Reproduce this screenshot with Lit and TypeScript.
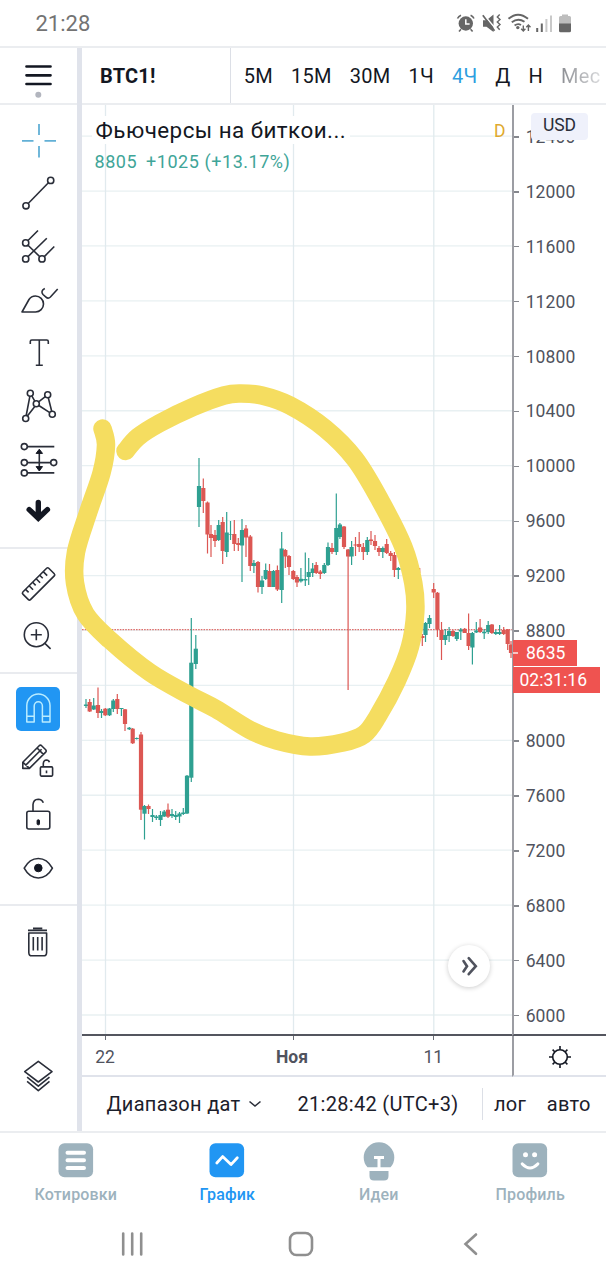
import {LitElement, html, svg, css} from 'lit';
import {customElement, property, state} from 'lit/decorators.js';
import {classMap} from 'lit/directives/class-map.js';

// [x, high, body top, body bottom, low, rising]
type Candle = [number, number, number, number, number, 0 | 1];

const CANDLES: Candle[] = [
    [86, 699, 704.5, 706, 708, 1],
    [89.7, 699, 702, 711.5, 712, 0],
    [93.7, 698, 705.5, 709.5, 710, 1],
    [98, 687.5, 705, 713, 718, 0],
    [101.5, 709, 711, 713, 718, 1],
    [105.3, 708, 708.7, 715.3, 716, 0],
    [109.5, 708, 708.5, 715.3, 716, 1],
    [113.3, 699, 700.5, 709, 712, 1],
    [117.3, 694, 699, 709, 714, 0],
    [121.4, 708, 708, 709, 716, 1],
    [125, 709, 709.3, 724, 731, 0],
    [129.3, 727, 727.7, 729.3, 730, 1],
    [132.7, 728, 728.7, 743.3, 744, 0],
    [136.7, 737.5, 738, 739, 739.5, 1],
    [141, 732, 734.5, 809.7, 820, 0],
    [144.5, 805, 806, 813.7, 839.5, 1],
    [148.5, 804.5, 806, 809, 814, 0],
    [152.5, 809, 815, 817, 822, 1],
    [156.3, 815, 816.5, 818, 820, 1],
    [160.5, 811, 815, 820, 826, 1],
    [164.2, 810, 811.5, 816.5, 817, 1],
    [168, 803.5, 809.7, 816.7, 818, 0],
    [172, 809, 814, 816, 818, 1],
    [175.7, 811, 815, 817, 820, 1],
    [179.5, 812, 813.5, 816.5, 823, 1],
    [183.3, 808, 812.5, 814, 815, 1],
    [187, 775, 775.7, 813.5, 814, 1],
    [191.3, 618, 662.7, 777.7, 782, 1],
    [195.8, 635, 648.7, 664, 669, 1],
    [199, 458, 486, 507, 527, 1],
    [203.3, 478.5, 488, 501, 513, 0],
    [207.5, 501.5, 502.5, 534.5, 553.5, 0],
    [211, 525, 534, 538, 557, 0],
    [215, 530, 535, 541, 547, 0],
    [218.7, 520, 525, 540, 541, 1],
    [222.7, 517, 522, 551, 564, 0],
    [226.7, 512, 532.5, 552, 557, 1],
    [230.5, 521, 534, 534.6, 540, 1],
    [234.3, 520, 534, 544, 551, 0],
    [238.3, 538, 543, 545, 551, 0],
    [242, 519, 530, 545.5, 582, 1],
    [246, 525, 528.5, 537.5, 557, 0],
    [250.3, 535, 536.5, 566, 571, 0],
    [253.9, 560, 563, 566, 573, 1],
    [258, 561, 562, 587, 592.5, 0],
    [262, 576, 580.5, 587, 594, 1],
    [265.7, 563.5, 570, 579, 580, 1],
    [269.5, 564, 571, 587, 587, 0],
    [273.5, 570, 571, 587, 587, 1],
    [277.4, 565.5, 570, 589.5, 591, 0],
    [281.7, 532, 548.5, 590, 603, 1],
    [285.3, 549, 550, 556.5, 568, 0],
    [289, 555, 556, 567, 575, 0],
    [293.3, 570, 571, 579, 580, 0],
    [297, 575, 577, 582.5, 587, 0],
    [300.9, 568, 578.8, 581.3, 582.5, 1],
    [305.3, 552.5, 579, 580.5, 586, 1],
    [308.7, 558, 572, 577, 585, 1],
    [312.7, 563, 568.5, 573, 577, 1],
    [316.2, 562, 565, 573, 574, 0],
    [320.3, 570, 571.5, 574, 579, 0],
    [324.3, 563, 565, 573, 574, 1],
    [328, 542.5, 547, 565, 566, 1],
    [332, 543, 548, 552, 554, 0],
    [336.3, 493.5, 528, 552, 555, 1],
    [339.9, 523, 524.5, 537, 539, 1],
    [344, 526, 526.5, 547, 549, 0],
    [348.1, 549, 549.5, 556.5, 690, 0],
    [351.6, 541, 547, 556.5, 565, 1],
    [355.5, 537, 544.5, 545.5, 556, 0],
    [359.2, 532, 544, 547, 552, 0],
    [363.3, 543, 547, 552, 560, 0],
    [367.3, 537, 540, 552, 555, 1],
    [371, 531, 539.5, 541, 545, 0],
    [375, 535, 541, 546, 550, 0],
    [379, 546, 548, 552, 556, 0],
    [382.8, 546.5, 548, 552, 558, 1],
    [386.7, 539, 544, 553, 554, 0],
    [390.7, 551, 553, 556, 561, 0],
    [394.4, 552, 555, 570, 577, 0],
    [398.3, 567, 568, 570, 579, 1],
    [418.2, 567, 568, 573, 574, 0],
    [422.3, 634, 636, 638, 646, 0],
    [425.5, 622, 623, 635, 642, 1],
    [429.5, 615, 618, 624, 628, 1],
    [433.7, 583, 589, 592.5, 598, 0],
    [437.4, 592, 592.7, 629.5, 637, 0],
    [441.5, 622, 630, 640, 660, 0],
    [445.3, 629, 635, 640, 645, 1],
    [449.1, 627, 631, 636, 642, 1],
    [453, 630, 631, 636, 637, 0],
    [456.8, 632, 632, 639, 641, 1],
    [460.8, 628, 629.5, 631.5, 640, 1],
    [464.7, 628, 628.8, 633, 633, 0],
    [468.6, 613.5, 633, 646, 650, 0],
    [472.4, 632, 633, 647.5, 664.5, 1],
    [476.3, 622, 630.5, 632.5, 633, 1],
    [480.1, 619, 627.5, 632, 633, 0],
    [484.2, 629, 631.7, 633.3, 639, 1],
    [488.2, 621, 625, 632, 634, 1],
    [491.9, 624, 624.5, 633, 634, 0],
    [495.8, 630, 632, 634, 635, 1],
    [499.6, 625, 632, 634, 635, 1],
    [503.7, 627, 630, 634, 635, 0],
    [507.7, 629, 629.5, 644, 650, 0],
    [511, 641, 644.5, 653, 658, 0],
];

const PRICES = [12400, 12000, 11600, 11200, 10800, 10400, 10000, 9600, 9200, 8800,
    8400, 8000, 7600, 7200, 6800, 6400, 6000];
const PRICE_STEP = 54.93;
const TIME_LINES = [105.5, 293.5, 433.8];

// freehand marker stroke, smoothed when drawn
const MARKER: [number, number][] = [
    [102.5, 428.5], [106, 445], [101.5, 473], [88.3, 512], [76, 552], [75, 583], [85.5, 614],
    [110, 640], [150, 672.5], [190, 695.5], [216, 709], [250, 730], [276.7, 740.5], [310, 746.5],
    [343, 742.5], [364, 734.5], [377.5, 716.7], [396.7, 681], [410, 646.7], [415.3, 612],
    [413.3, 583], [403.3, 546.7], [380, 500], [355, 459], [325, 428.5], [290, 405.5],
    [262, 395.5], [241, 393.5], [224, 395.5], [193, 407], [160, 423], [138, 437], [125.5, 451],
];

function smoothPath(points: [number, number][]) {
    let d = `M${points[0][0]} ${points[0][1]}`;
    for (let i = 0; i < points.length - 1; i++) {
        const p0 = points[Math.max(i - 1, 0)];
        const p1 = points[i];
        const p2 = points[i + 1];
        const p3 = points[Math.min(i + 2, points.length - 1)];
        d += ` C${p1[0] + (p2[0] - p0[0]) / 6} ${p1[1] + (p2[1] - p0[1]) / 6}`
            + ` ${p2[0] - (p3[0] - p1[0]) / 6} ${p2[1] - (p3[1] - p1[1]) / 6} ${p2[0]} ${p2[1]}`;
    }
    return d;
}

// tool icons, drawn around the origin
const ICONS: Record<string, unknown> = {
    cross: svg`<path stroke="#62b0d6" stroke-width="1.8" d="M1 -16V-5M1 6V17.5M-16 .8H-4.5M6.5 .8H18"/>`,
    line: svg`<circle cx="-12" cy="12.8" r="3.1"/><circle cx="12.7" cy="-12.6" r="3.1"/>
        <path d="M-9.8 10.5L10.4 -10.3"/>`,
    pitchfork: svg`<circle cx="-12.3" cy="-3.1" r="3.1"/><circle cx="-12.3" cy="12.9" r="3.1"/>
        <circle cx="4" cy="12.9" r="3.1"/>
        <path d="M-10 -5.5L0 -15.5M-10 10.6L8.8 -7.8M6.3 10.6L16.3 .5M-10 -.8L1.8 10.7"/>`,
    brush: svg`<path d="M-16 13L-9 .5C-7.4 -2 -5 -3 -2.5 -3A8 8 0 0 1 -2.5 13Z"/>
        <path d="M6.8 -10.5Q2.2 -8 5 -4.5L8 -1.8Q10.2 .2 12.4 -2L19.7 -10"/>`,
    text: svg`<path d="M-7.7 -8V-10.5Q-7.7 -12 -6.2 -12H8.8Q10.3 -12 10.3 -10.5V-8M1.3 -12V13.2M-2.2 13.2H4.8"/>`,
    pattern: svg`<circle cx="-7.7" cy="-11.8" r="3"/><circle cx="9.7" cy="-10.2" r="3"/>
        <circle cx="-1.7" cy="-1.2" r="3"/><circle cx="-12.3" cy="13.5" r="3"/>
        <circle cx="14.3" cy="9.2" r="3"/>
        <path d="M-8.1 -8.8L-11.8 10.5M-6.2 -9.2L-3.2 -3.8M.6 -3.2L7.3 -8.3M10.3 -7.2L13.7 6.2M-3.2 1.4L-10.6 11M.8 .5L11.8 7.6"/>`,
    position: svg`<circle cx="-13.7" cy="-11.4" r="3"/><circle cx="-13.7" cy="4.6" r="3"/>
        <circle cx="-13.7" cy="14.9" r="3"/><circle cx="15.7" cy="4.6" r="3"/>
        <path d="M-10.7 -11.4H16.3M-10.7 4.6H12.7M-10.7 14.9H16.3M1.3 -6V11"/>
        <path class="fill" d="M1.3 -8.8L4.5 -4.6H-1.9ZM1.3 13L4.5 8.6H-1.9Z"/>`,
    arrow: svg`<path class="thick" d="M.3 -8.6V7M-8.8 -1.4L.3 7.2L9.4 -1.4"/>`,
    ruler: svg`<g transform="translate(.5 .9) rotate(-45)"><rect x="-18.3" y="-5.3" width="36.6" height="10.8" rx="1.5"/>
        <path d="M-13 -5.3V-1M-8 -5.3V.3M-3 -5.3V-1M2 -5.3V.3M7 -5.3V-1M12 -5.3V.3"/></g>`,
    zoom: svg`<circle cx="-1.7" cy="-1.3" r="12"/><path d="M-7.2 -1.3H3.8M-1.7 -6.8V4.2M6.9 7.4L12.6 12.9"/>`,
    magnet: svg`<path stroke="#b9ecff" stroke-width="1.5" d="M-11.2 13V-3.5A11.6 11.4 0 0 1 12 -3.5V13H4.4V-3A4 4.2 0 0 0 -3.8 -3V13ZM-11.2 7.2H-3.8M4.4 7.2H12"/>`,
    pencil: svg`<path d="M-15.2 6.4V.2L1.2 -16.3Q2.4 -17.3 3.6 -16.3L7.7 -12.3Q8.7 -11 7.7 -9.9L-8.6 6.4ZM-12.5 3.4L3.6 -12.8M-15 .4L-8.8 6M-.9 -14L5.4 -7.6"/>
        <rect x="2.4" y="4.9" width="12.2" height="9.2" rx="1"/><path d="M5.3 4.6V1.8Q5.5 -1.9 8.6 -2Q10.8 -2 11.4 .2M8.5 8.6V11.2"/>`,
    lock: svg`<rect x="-11.2" y="-3.7" width="23" height="17.7" rx="2"/>
        <path d="M-5 -3.7V-10.5Q-4.6 -15.6 .2 -15.8Q4 -15.7 5.3 -12.2"/><rect class="fill" x="-.9" y="4.8" width="2.4" height="5" rx="1"/>`,
    eye: svg`<path d="M-13.8 .2C-6.8 -12.8 7.4 -12.8 14.4 .2C7.4 13.2 -6.8 13.2 -13.8 .2Z"/>
        <circle class="fill" cx=".3" cy="0" r="3.8"/>`,
    trash: svg`<path d="M-10 -10.6H9M-5 -12.6H4.3M-9.2 -8V11.4Q-9.2 14.8 -6 14.8H5.4Q8.6 14.8 8.6 11.4V-8ZM-4.7 -4V9.4M-.3 -4V9.4M4.1 -4V9.4"/>`,
    layers: svg`<path d="M.3 -14.7L14 -4.3L.3 6L-13.3 -4.3ZM-10.9 1.2L.3 10.2L11.5 1.2M-10.9 5.4L.3 14.6L11.5 5.4"/>`,
};

const TOOL_GROUPS = [
    ['cross', 'line', 'pitchfork', 'brush', 'text', 'pattern', 'position', 'arrow'],
    ['ruler', 'zoom'],
    ['magnet', 'pencil', 'lock', 'eye'],
    ['trash'],
];

@customElement('status-bar')
export class StatusBar extends LitElement {
    static styles = css`
        :host {
            display: flex;
            justify-content: space-between;
            align-items: center;
            height: 46px;
            padding: 0 32px 0 35.5px;
            box-sizing: border-box;
            color: #737373;
            font-size: 22px;
        }

        svg {
            display: block;
        }
    `;

    render() {
        return html`
            <span>21:28</span>
            <svg width="120" height="24" viewBox="454 10 120 24" fill="none" stroke="#666" stroke-width="1.6">
                <circle cx="465.8" cy="22.5" r="7.2" fill="#666" stroke="none"/>
                <path d="M457.5 17.5Q458.6 15.2 461 14.2M474 17.5Q473 15.2 470.6 14.2M461 28.2L459 30.6M470.6 28.2L472.6 30.6"/>
                <path stroke="#fff" stroke-width="1.5" d="M465.8 18.3V23H469.6"/>
                <path fill="#666" stroke="none" d="M483 19.3H486.5L493.5 13.5V31L486.5 25.8H483Z"/>
                <path stroke="#fff" stroke-width="1.4" d="M484.5 14.5L495 27"/>
                <path stroke-width="1.7" d="M482.8 14.3L494.5 29.8"/>
                <path stroke-width="1.4" d="M499.7 13.5L497.3 16L500 18.5L497.3 21L500 23.5L497.3 26L499.7 28.8"/>
                <path stroke-width="1.9" d="M508.5 17.8Q518 9.5 528 17.8M511.8 21.3Q518 16.4 524.5 20.8M514.6 24.6Q517.8 22 521 24"/>
                <circle cx="517.8" cy="26.6" r="1.7" fill="#666" stroke="none"/>
                <path stroke-width="1.4" d="M523.3 24.5V30M521.2 27.8L523.3 30L525.4 27.8M528.4 30V24M526.3 26.2L528.4 24L530.5 26.2"/>
                <path stroke-width="2" d="M537.2 27V31M541.8 22.5V31"/>
                <path stroke="#c9c9c9" stroke-width="2" d="M546.4 18V31M551 14.5V31"/>
                <path fill="#bdbdbd" stroke="none" d="M559 23V16.5Q559 15 560.5 15H562V13.4H568V15H569.5Q571 15 571 16.5V23Z"/>
                <path fill="#666" stroke="none" d="M559 22.5H571V29.8Q571 31.3 569.5 31.3H560.5Q559 31.3 559 29.8Z"/>
            </svg>
        `;
    }
}

@customElement('tool-icon')
export class ToolIcon extends LitElement {
    static styles = css`
        :host {
            display: block;
            width: 44px;
            height: 44px;
            border-radius: 5px;
        }

        :host([active]) {
            background: #2196f3;
        }

        svg {
            display: block;
            overflow: visible;
            fill: none;
            stroke: #2a2e39;
            stroke-width: 1.6;
            stroke-linejoin: round;
        }

        .fill {
            fill: #131722;
            stroke: #131722;
            stroke-width: 1;
        }

        .thick {
            stroke: #131722;
            stroke-width: 5.4;
            stroke-linecap: round;
            stroke-linejoin: miter;
        }
    `;

    @property() name = '';
    @property({type: Boolean, reflect: true}) active = false;

    render() {
        return html`<svg width="44" height="44" viewBox="-22 -22 44 44">${ICONS[this.name]}</svg>`;
    }
}

@customElement('side-toolbar')
export class SideToolbar extends LitElement {
    static styles = css`
        :host {
            display: flex;
            flex-direction: column;
            width: 77px;
            border-right: 5px solid #e0e3eb;
        }

        .menu {
            height: 57px;
            border-bottom: 2px solid #ebedf0;
            box-sizing: border-box;
        }

        .menu svg {
            display: block;
        }

        .group {
            padding: 8.4px 1px 9.2px 0;
            border-bottom: 2px solid #e9ebef;
            display: grid;
            grid-auto-rows: 53px;
            place-items: center;
        }

        .group:last-of-type {
            border-bottom: none;
        }

        .layers {
            margin: auto auto 33px 16px;
        }
    `;

    @state() private _active = 'magnet';

    render() {
        return html`
            <div class="menu">
                <svg width="77" height="55" viewBox="0 48 77 55">
                    <path stroke="#131722" stroke-width="2.7" stroke-linecap="round" d="M26.5 66.5H50.5M26.5 75.3H50.5M26.5 84H50.5"/>
                    <circle cx="38.3" cy="94.8" r="3" fill="#b2b5be"/>
                </svg>
            </div>
            ${TOOL_GROUPS.map((group) => html`
                <div class="group">
                    ${group.map((name) => html`
                        <tool-icon name="${name}" ?active=${name === this._active}></tool-icon>`)}
                </div>`)}
            <tool-icon class="layers" name="layers"></tool-icon>
        `;
    }
}

@customElement('chart-header')
export class ChartHeader extends LitElement {
    static styles = css`
        :host {
            display: flex;
            height: 57px;
            box-sizing: border-box;
            border-bottom: 2px solid #ebedf0;
            color: #131722;
            font-size: 20px;
            overflow: hidden;
        }

        .symbol {
            width: 149px;
            padding-left: 18px;
            box-sizing: border-box;
            border-right: 1.5px solid #dcdfe6;
            font-weight: 700;
            letter-spacing: 0.2px;
            display: flex;
            align-items: center;
        }

        .intervals {
            flex: 1;
            display: flex;
            align-items: center;
            gap: 17.9px;
            padding-left: 12.8px;
            white-space: nowrap;
            letter-spacing: 0.3px;
        }

        .active {
            color: #2f9fe0;
        }

        .cut {
            background: linear-gradient(90deg, #8c8e93, #d8d9db);
            background-clip: text;
            color: transparent;
        }
    `;

    @state() private _interval = '4Ч';

    render() {
        return html`
            <div class="symbol">BTC1!</div>
            <div class="intervals">
                ${['5М', '15М', '30М', '1Ч', '4Ч', 'Д', 'Н', 'Мес'].map((label) => html`
                    <span class=${classMap({active: label === this._interval, cut: label === 'Мес'})}>${label}</span>`)}
            </div>
        `;
    }
}

@customElement('price-chart')
export class PriceChart extends LitElement {
    static styles = css`
        :host {
            position: relative;
            display: grid;
            grid-template-columns: 430px 1fr;
            grid-template-rows: 931px 41px;
            color: #50535e;
            font-size: 17.5px;
        }

        .plot {
            border-bottom: 2px solid #54565f;
            box-sizing: border-box;
            overflow: hidden;
        }

        .plot svg {
            display: block;
        }

        .legend {
            position: absolute;
            left: 10px;
            top: 11px;
        }

        .title {
            font-size: 22.4px;
            line-height: 28px;
            letter-spacing: 0.47px;
            color: #131722;
            background: #fff;
            padding: 0 4px 0 3.5px;
            margin-bottom: 5px;
        }

        .change {
            font-size: 18px;
            line-height: 26px;
            padding-left: 2.5px;
            color: #3fa598;
            letter-spacing: 0.52px;
            word-spacing: 0.3px;
        }

        .change b {
            font-weight: 400;
            margin-right: 9px;
        }

        .delay {
            position: absolute;
            left: 412px;
            top: 15px;
            line-height: 22px;
            color: #e0a92e;
            font-size: 17.5px;
        }

        .scale {
            border-left: 2px solid #9c9da3;
            border-bottom: 2px solid #54565f;
            box-sizing: border-box;
            overflow: hidden;
            padding-top: 4.4px;
        }

        .price {
            display: flex;
            align-items: center;
            gap: 6.7px;
            height: 54.93px;
            letter-spacing: 0.1px;
        }

        .price::before {
            content: '';
            width: 5px;
            height: 1.5px;
            background: #85878d;
        }

        .unit {
            position: absolute;
            left: 449px;
            top: 8px;
            width: 57px;
            height: 27px;
            line-height: 25px;
            border-radius: 4px;
            background: #eff1fb;
            color: #2a2e39;
            text-align: center;
            font-size: 17.5px;
        }

        .last {
            position: absolute;
            left: 431px;
            top: 535px;
            color: #fff;
        }

        .last div {
            display: flex;
            align-items: center;
            gap: 8px;
            width: 63.5px;
            height: 26px;
            margin-bottom: 1px;
            background: #ef5350;
        }

        .last div:first-child::before {
            content: '';
            width: 5px;
            height: 1.5px;
            background: #f9c3c2;
        }

        .last .countdown {
            width: 86.5px;
            padding-left: 6.5px;
            box-sizing: border-box;
        }

        .scroll {
            position: absolute;
            left: 365.5px;
            top: 839.5px;
            width: 42px;
            height: 42px;
            border-radius: 50%;
            background: #fff;
            box-shadow: 0 1px 5px rgba(0, 0, 0, 0.2);
        }

        .times {
            display: grid;
            grid-template-columns: 46px 328px 1fr;
            align-items: center;
            border-bottom: 2px solid #e0e3eb;
            box-sizing: border-box;
            padding-top: 3px;
            background:
                linear-gradient(#6a6d76, #6a6d76) 23px 0 / 1px 4px no-repeat,
                linear-gradient(#6a6d76, #6a6d76) 211px 0 / 1px 4px no-repeat,
                linear-gradient(#6a6d76, #6a6d76) 351px 0 / 1px 4px no-repeat;
        }

        .times span {
            text-align: center;
        }

        .times .month {
            font-weight: 700;
        }

        .times span:last-child {
            text-align: left;
            margin-left: -32.5px;
        }

        .corner {
            border-left: 2px solid #9c9da3;
            border-bottom: 2px solid #e0e3eb;
            box-sizing: border-box;
            display: grid;
            place-items: center;
            padding-top: 2px;
        }
    `;

    _candle([x, high, top, bottom, low, up]: Candle) {
        const color = up ? '#2ea091' : '#dc5753';
        return svg`
            <path stroke="${color}" stroke-width="1.2" d="M${x} ${high}V${low}"/>
            <rect x="${x - 2.1}" y="${top}" width="4.2" height="${bottom - top}" fill="${color}"/>
        `;
    }

    render() {
        return html`
            <div class="plot">
                <svg width="430" height="929" viewBox="82 105 430 929">
                    ${PRICES.map((_, i) => svg`
                        <path stroke="#e8f0f2" stroke-width="1.3" d="M82 ${136.1 + i * PRICE_STEP}H513"/>`)}
                    ${TIME_LINES.map((x) => svg`
                        <path stroke="#e1eaee" stroke-width="1.3" d="M${x} 105V1034"/>`)}
                    <path stroke="#dd6f6c" stroke-width="1.3" stroke-dasharray="1.6 1.1" d="M82 629.6H513"/>
                    ${CANDLES.map((candle) => this._candle(candle))}
                </svg>
            </div>
            <div class="scale">
                ${PRICES.map((price) => html`
                    <div class="price">${price === 8400 ? '' : price}</div>`)}
            </div>
            <div class="times"><span>22</span><span class="month">Ноя</span><span>11</span></div>
            <div class="corner">
                <svg width="24" height="24" viewBox="-12 -12 24 24" fill="none" stroke="#131722" stroke-width="1.6">
                    <circle r="7.3"/>
                    <path d="M0 -7.5V-11M0 7.5V11M-7.5 0H-11M7.5 0H11M-5.3 -5.3L-7.4 -7.4M5.3 -5.3L7.4 -7.4M-5.3 5.3L-7.4 7.4M5.3 5.3L7.4 7.4"/>
                </svg>
            </div>
            <div class="legend">
                <div class="title">Фьючерсы на биткои...</div>
                <div class="change"><b>8805</b>+1025 (+13.17%)</div>
            </div>
            <div class="delay">D</div>
            <div class="unit">USD</div>
            <div class="last">
                <div>8635</div>
                <div class="countdown">02:31:16</div>
            </div>
            <div class="scroll">
                <svg width="42" height="42" viewBox="-21 -21 42 42" fill="none" stroke="#50535e" stroke-width="2.6" stroke-linecap="round">
                    <path d="M-5.5 -5L-2 .2L-5.5 5.4M-.3 -7.8L6.8 .2L-.3 8.2"/>
                </svg>
            </div>
        `;
    }
}

@customElement('range-bar')
export class RangeBar extends LitElement {
    static styles = css`
        :host {
            display: flex;
            align-items: center;
            flex: 1;
            padding-left: 24.5px;
            color: #1c202b;
            font-size: 20px;
            letter-spacing: 0.3px;
            white-space: nowrap;
        }

        .range {
            width: 191px;
            display: flex;
            align-items: center;
            gap: 7.5px;
        }

        .clock {
            width: 184.5px;
        }

        .scales {
            display: flex;
            align-items: center;
            gap: 20.5px;
            height: 32px;
            padding-left: 11px;
            border-left: 1.5px solid #dcdfe6;
        }
    `;

    render() {
        return html`
            <div class="range">
                <span>Диапазон дат</span>
                <svg width="14" height="10" viewBox="0 0 14 10" fill="none" stroke="#2a2e39" stroke-width="1.6">
                    <path d="M1.5 2.5L7 7L12.5 2.5"/>
                </svg>
            </div>
            <div class="clock">21:28:42 (UTC+3)</div>
            <div class="scales"><span>лог</span><span>авто</span></div>
        `;
    }
}

@customElement('tab-bar')
export class TabBar extends LitElement {
    static styles = css`
        :host {
            display: flex;
            height: 80px;
            box-sizing: border-box;
            border-top: 2px solid #ebedf0;
            color: #9db2bd;
            font-size: 16px;
            font-weight: 500;
            letter-spacing: 0.15px;
        }

        .tab {
            flex: 1;
            display: flex;
            flex-direction: column;
            align-items: center;
            padding-top: 8px;
            gap: 4px;
        }

        .tab svg {
            display: block;
            fill: currentColor;
        }

        .active {
            color: #2196f3;
        }
    `;

    @state() private _tab = 'График';

    private _tabs = [
        {
            label: 'Котировки',
            icon: svg`<rect x="2.5" y="2.3" width="34.6" height="34" rx="6"/>
                <path stroke="#fff" stroke-width="4" stroke-linecap="round" d="M11.5 11.8H28M11.5 19.3H28M11.5 27H28"/>`,
        },
        {
            label: 'График',
            icon: svg`<rect x="2.5" y="2.3" width="34.6" height="34" rx="6"/>
                <path fill="none" stroke="#fff" stroke-width="2.8" stroke-linecap="round" stroke-linejoin="round" d="M9.8 22L15.6 15.6L24 23.6L30.3 16.8"/>`,
        },
        {
            label: 'Идеи',
            icon: svg`<path d="M8.5 26.3Q4.7 22.3 4.7 16.5A15.3 15.3 0 0 1 35.3 16.5Q35.3 22.3 31.5 26.3ZM10.5 30H29.5V35Q29.5 39.5 25 39.5H15Q10.5 39.5 10.5 35Z"/>
                <path stroke="#fff" stroke-width="3" d="M15 16.6H25M20 16V27.5"/>`,
        },
        {
            label: 'Профиль',
            icon: svg`<rect x="2.5" y="2.3" width="34.6" height="34" rx="6"/>
                <circle cx="15.5" cy="13.8" r="2.5" fill="#fff"/><circle cx="24.6" cy="13.8" r="2.5" fill="#fff"/>
                <path fill="none" stroke="#fff" stroke-width="3.2" stroke-linecap="round" d="M12.3 23Q20 31 27.8 23"/>`,
        },
    ];

    render() {
        return html`
            ${this._tabs.map((tab) => html`
                <div class="tab ${tab.label === this._tab ? 'active' : ''}">
                    <svg width="40" height="40" viewBox="0 0 40 40">${tab.icon}</svg>
                    ${tab.label}
                </div>`)}
        `;
    }
}

@customElement('system-nav')
export class SystemNav extends LitElement {
    static styles = css`
        :host {
            display: flex;
            justify-content: center;
            gap: 141px;
            height: 69px;
            padding: 19px 4px 0 0;
            box-sizing: border-box;
        }

        svg {
            fill: none;
            stroke: #8f8f8f;
            stroke-width: 2.6;
            stroke-linecap: round;
        }
    `;

    render() {
        return html`
            <svg width="28" height="28" viewBox="0 0 28 28"><path d="M5.2 3.5V24.5M14.2 3.5V24.5M23.2 3.5V24.5"/></svg>
            <svg width="28" height="28" viewBox="0 0 28 28"><rect x="3" y="3" width="22" height="22" rx="6.5"/></svg>
            <svg width="28" height="28" viewBox="0 0 28 28"><path d="M20 4.5L9.5 14L20 23.8"/></svg>
        `;
    }
}

@customElement('app-root')
export class AppRoot extends LitElement {
    static styles = css`
        :host {
            position: relative;
            display: flex;
            flex-direction: column;
            width: 606px;
            height: 1280px;
            overflow: hidden;
            background: #fff;
            font-family: Roboto, "Liberation Sans", sans-serif;
        }

        .main {
            display: flex;
            height: 1085px;
            box-sizing: border-box;
            border-top: 2px solid #ebedf0;
        }

        .chart {
            flex: 1;
            min-width: 0;
            display: flex;
            flex-direction: column;
        }

        .marker {
            position: absolute;
            inset: 0;
            pointer-events: none;
        }
    `;

    render() {
        return html`
            <status-bar></status-bar>
            <div class="main">
                <side-toolbar></side-toolbar>
                <div class="chart">
                    <chart-header></chart-header>
                    <price-chart></price-chart>
                    <range-bar></range-bar>
                </div>
            </div>
            <tab-bar></tab-bar>
            <system-nav></system-nav>
            <svg class="marker" width="606" height="1280" viewBox="0 0 606 1280">
                <path d="${smoothPath(MARKER)}" fill="none" stroke="#f5dd60" stroke-width="18.5"
                      stroke-linecap="round" stroke-linejoin="round"/>
            </svg>
        `;
    }
}
